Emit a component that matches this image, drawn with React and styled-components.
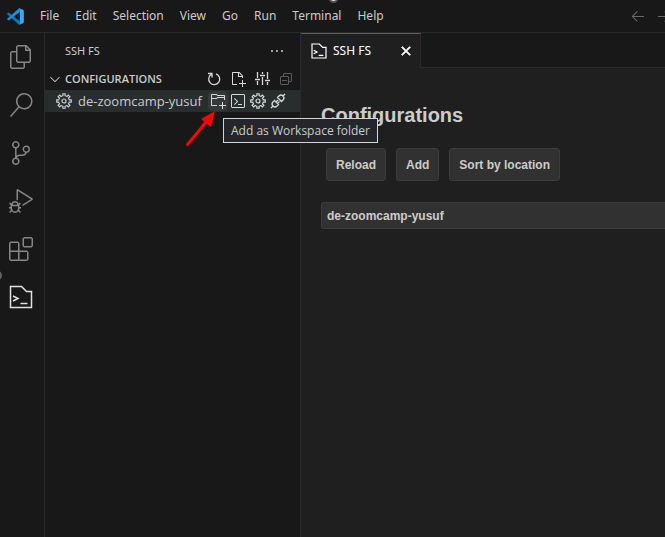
import React from "react";
import styled, { createGlobalStyle, css } from "styled-components";
import {
  VscFiles, VscSearch, VscSourceControl, VscDebugAlt, VscExtensions,
  VscNewFile, VscCollapseAll,
  VscNewFolder, VscTerminal, VscArrowLeft,
  VscArrowRight, VscClose, VscEllipsis, VscChevronDown,
} from "react-icons/vsc";

const Global = createGlobalStyle`
  * { box-sizing: border-box; }
  body { margin: 0; background: #181818; overflow: hidden; }
  button { font: inherit; color: inherit; background: none; border: 0; padding: 0; margin: 0; }
`;

const Window = styled.div`
  display: flex;
  flex-direction: column;
  height: 100vh;
  background: #181818;
  color: #cccccc;
  font: 12px/16px "Segoe UI", "Noto Sans", sans-serif;
`;

const TitleBar = styled.header`
  position: relative;
  display: flex;
  align-items: center;
  flex: none;
  height: 33px;
  padding: 0 0 0 7px;
  border-bottom: 1px solid #2b2b2b;
`;

const Menu = styled.nav`
  display: flex;
  margin-left: 8px;
`;

const MenuItem = styled.button`
  padding: 0 8px;
  white-space: nowrap;
`;

const History = styled.div`
  display: flex;
  gap: 10px;
  margin-left: auto;
  margin-right: -7px;
  color: #6a6a6a;
  font-size: 16px;
  button { display: flex; }
`;

const Dot = styled.span`
  position: absolute;
  top: -5px;
  left: 329px;
  width: 9px;
  height: 8px;
  border: 2px solid #555;
  border-radius: 50%;
  background: #ddd;
`;

const Body = styled.div`
  display: flex;
  flex: 1;
  min-height: 0;
`;

const ActivityBar = styled.nav`
  position: relative;
  flex: none;
  width: 45px;
  border-right: 1px solid #2b2b2b;
`;

const EdgeKnob = styled.span`
  position: absolute;
  top: 238px;
  left: -6px;
  width: 8px;
  height: 9px;
  border-radius: 50%;
  background: #616161;
`;

const Activity = styled.button`
  display: flex;
  align-items: center;
  justify-content: center;
  width: 42px;
  height: 48px;
  font-size: 24px;
  color: ${(p) => (p.$active ? "#e0e0e0" : "#868686")};
`;

const SideBar = styled.aside`
  flex: none;
  width: 256px;
  border-right: 1px solid #2b2b2b;
`;

const SideHeader = styled.div`
  display: flex;
  align-items: center;
  justify-content: space-between;
  height: 35px;
  padding: 0 15px 0 20px;
  font-size: 11px;
  button { display: flex; font-size: 16px; }
`;

const line = css`
  display: flex;
  align-items: center;
  height: 22px;
`;

const SectionHeader = styled.div`
  ${line}
  padding: 0 4px 0 2px;
`;

const SectionToggle = styled.button`
  display: flex;
  align-items: center;
  gap: 2px;
  flex: 1;
  font-family: "Segoe UI", "Open Sans", sans-serif;
  font-size: 11px;
  font-weight: 600;
  svg { font-size: 16px; }
`;

const Actions = styled.div`
  display: flex;
  gap: ${(p) => p.$gap}px;
`;

const Action = styled.button`
  display: flex;
  align-items: center;
  justify-content: center;
  width: 20px;
  height: 20px;
  border-radius: 5px;
  font-size: 16px;
  color: ${(p) => (p.disabled ? "#5c5c5c" : "#d8d8d8")};
  background: ${(p) => (p.$hover ? "#363939" : "none")};
`;

const TreeRow = styled.div`
  ${line}
  position: relative;
  padding: 0 12px 0 11px;
  background: #282d2e;
  font-family: "Segoe UI", "Open Sans", sans-serif;
  font-size: 13px;
  > svg { flex: none; }
`;

const RowName = styled.span`
  flex: 1;
  margin-left: 6px;
  white-space: nowrap;
`;

const Tooltip = styled.div`
  position: absolute;
  z-index: 2;
  top: 28px;
  left: 178px;
  padding: 3px 7px;
  border: 1px solid #d4d4d4;
  background: #25262b;
  font-size: 12px;
  line-height: 17px;
  white-space: nowrap;
`;

const Pointer = styled.svg`
  position: absolute;
  top: 19px;
  left: 140px;
`;

const Editor = styled.main`
  flex: 1;
  min-width: 0;
  background: #1f1f1f;
`;

const TabStrip = styled.div`
  display: flex;
  height: 35px;
  background: #181818;
`;

const Tab = styled.div`
  display: flex;
  align-items: center;
  width: 120px;
  padding: 0 6px 0 10px;
  border-top: 1px solid #0078d4;
  border-right: 1px solid #2b2b2b;
  background: #1f1f1f;
  color: #ffffff;
  span { flex: 1; margin-left: 6px; }
  button { display: flex; font-size: 16px; }
  button svg { stroke: currentColor; stroke-width: 1; }
`;

const StripRest = styled.div`
  flex: 1;
  border-bottom: 1px solid #2b2b2b;
`;

const Content = styled.section`
  padding: 35px 0 0 20px;
  font-family: "Liberation Sans", Arial, sans-serif;
`;

const Heading = styled.h2`
  margin: 0;
  font-size: 20px;
  line-height: 24px;
`;

const ButtonRow = styled.div`
  display: flex;
  gap: 10px;
  margin: 21px 5px;
`;

const PanelButton = styled.button`
  && {
    height: 33px;
    padding: 0 9px;
    border: 1px solid #3c3c3c;
    border-radius: 3px;
    background: #313131;
    font-size: 12px;
    font-weight: 700;
    white-space: nowrap;
  }
`;

const ConfigItem = styled.button`
  && {
    display: block;
    width: 100%;
    height: 27px;
    padding: 0 5px;
    border: 1px solid #3c3c3c;
    border-right: 0;
    border-radius: 3px 0 0 3px;
    background: #313131;
    font-size: 12px;
    font-weight: 700;
    text-align: left;
  }
`;

const Logo = () => (
  <svg width="17" height="17" viewBox="0 0 100 100" aria-hidden="true">
    <path d="M10 27 76 78v21h-5L1 37v-5Z" fill="#0879bd" />
    <path d="M10 73 76 22V1h-5L1 63v5Z" fill="#1691df" />
    <path d="m72 1 22 10q5 3 5 8v62q0 5-5 8L72 99l4-7V8Z" fill="#36aaf5" />
  </svg>
);

const ConsoleFile = ({ size, stroke }) => (
  <svg width={size} height={size} viewBox="0 0 24 24" fill="none" stroke="currentColor" strokeWidth={stroke} aria-hidden="true">
    <path d="M1.5 1.5h11l5 5h5v16h-21Z" />
    <path d="m4 11 5 2.5L4 16M11.5 18.5h7" />
  </svg>
);

const teeth = [0, 45, 90, 135, 180, 225, 270, 315];
const Gear = () => (
  <svg width="16" height="16" viewBox="0 0 32 32" fill="none" stroke="currentColor" strokeWidth="2.400" aria-hidden="true">
    {teeth.map((a) => (
      <path key={a} transform={`rotate(${a} 16 16)`} d="M11.900 6.100 13.800 5.400V1.500h4.400v3.900L20.100 6.100" />
    ))}
    <circle cx="16" cy="16" r="4" />
  </svg>
);

const Reload = () => (
  <svg width="16" height="16" viewBox="0 0 16 16" fill="none" stroke="currentColor" strokeWidth="1.300" aria-hidden="true">
    <path d="M5.500 3.300A5.500 5.500 0 1 0 10 2.900M2 2.500h4v4" />
  </svg>
);

const Sliders = () => (
  <svg width="16" height="16" viewBox="0 0 16 16" fill="none" stroke="currentColor" aria-hidden="true">
    <path d="M3.500 1v6M3.500 10v4M8.500 1v2M8.500 6v8M13.500 1v7M13.500 11v3" strokeWidth="1.300" />
    <path d="M1 8.500h5M6 4.500h5M11 9.500h5" strokeWidth="1.600" />
  </svg>
);

const Plug = () => (
  <svg width="16" height="16" viewBox="0 0 16 16" fill="none" stroke="currentColor" strokeWidth="1.300" aria-hidden="true">
    <path d="m7.500 4.500 4 4 1.500-1.500q2-2 0-4t-4 0ZM13 3l2-2" />
    <path d="m4.500 7.500 4 4L7 13q-2 2-4 0t0-4ZM3 13l-2 2M6 9l2-2M7.500 10.500l2-2" />
  </svg>
);

const activities = [
  ["Explorer", VscFiles], ["Search", VscSearch], ["Source Control", VscSourceControl],
  ["Run and Debug", VscDebugAlt], ["Extensions", VscExtensions],
];
const menus = ["File", "Edit", "Selection", "View", "Go", "Run", "Terminal", "Help"];

export default function App() {
  return (
    <Window>
      <Global />
      <TitleBar>
        <Logo />
        <Menu>{menus.map((m) => <MenuItem key={m}>{m}</MenuItem>)}</Menu>
        <Dot />
        <History>
          <button aria-label="Go Back"><VscArrowLeft /></button>
          <button aria-label="Go Forward"><VscArrowRight /></button>
        </History>
      </TitleBar>
      <Body>
        <ActivityBar>
          {activities.map(([label, Icon]) => (
            <Activity key={label} aria-label={label}><Icon /></Activity>
          ))}
          <Activity $active aria-label="SSH FS"><ConsoleFile size={24} stroke={1.5} /></Activity>
          <EdgeKnob />
        </ActivityBar>
        <SideBar>
          <SideHeader>
            <span>SSH FS</span>
            <button aria-label="More Actions"><VscEllipsis /></button>
          </SideHeader>
          <SectionHeader>
            <SectionToggle aria-expanded="true"><VscChevronDown />CONFIGURATIONS</SectionToggle>
            <Actions $gap={4}>
              <Action aria-label="Refresh"><Reload /></Action>
              <Action aria-label="Create configuration"><VscNewFile /></Action>
              <Action aria-label="Settings"><Sliders /></Action>
              <Action aria-label="Collapse All" disabled><VscCollapseAll /></Action>
            </Actions>
          </SectionHeader>
          <TreeRow>
            <Gear />
            <RowName>de-zoomcamp-yusuf</RowName>
            <Actions $gap={0}>
              <Action $hover aria-label="Add as Workspace folder"><VscNewFolder /></Action>
              <Action aria-label="Open terminal"><VscTerminal /></Action>
              <Action aria-label="Configure"><Gear /></Action>
              <Action aria-label="Disconnect"><Plug /></Action>
            </Actions>
            <Pointer width="34" height="38" viewBox="0 0 34 38" aria-hidden="true">
              <path d="M2.500 35.500 22 12" stroke="#fb0207" strokeWidth="3" strokeLinecap="round" />
              <path d="M30 2 26 18 16 10Z" fill="#fb0207" />
            </Pointer>
            <Tooltip role="tooltip">Add as Workspace folder</Tooltip>
          </TreeRow>
        </SideBar>
        <Editor>
          <TabStrip>
            <Tab>
              <ConsoleFile size={16} stroke={1.8} />
              <span>SSH FS</span>
              <button aria-label="Close"><VscClose /></button>
            </Tab>
            <StripRest />
          </TabStrip>
          <Content>
            <Heading>Configurations</Heading>
            <ButtonRow>
              <PanelButton>Reload</PanelButton>
              <PanelButton>Add</PanelButton>
              <PanelButton>Sort by location</PanelButton>
            </ButtonRow>
            <ConfigItem>de-zoomcamp-yusuf</ConfigItem>
          </Content>
        </Editor>
      </Body>
    </Window>
  );
}
